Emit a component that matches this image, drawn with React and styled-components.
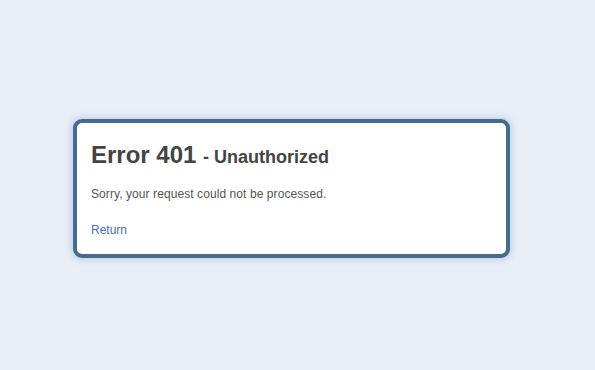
import React from 'react';
import styled, { createGlobalStyle } from 'styled-components';

const GlobalStyle = createGlobalStyle`
  html, body {
    margin: 0;
    padding: 0;
    background: #e9eff7;
    font-family: "Liberation Sans", Arial, sans-serif;
  }
`;

const Page = styled.div`
  width: 595px;
  height: 370px;
  display: flex;
  justify-content: center;
  align-items: flex-start;
  padding-top: 119px;
  box-sizing: border-box;
`;

const Card = styled.div`
  width: 437px;
  height: 139px;
  box-sizing: border-box;
  margin-left: -12px;
  background: #fff;
  border: 4px solid #456c8c;
  border-radius: 9px;
  box-shadow: 0 0 6px 2px rgba(140, 175, 215, 0.45);
  padding: 18px 14px;
  color: #444;
`;

const Title = styled.h1`
  margin: 0;
  font-size: 24px;
  font-weight: bold;
  line-height: 28px;
`;

const Sub = styled.span`
  font-size: 18px;
`;

const Text = styled.p`
  margin: 16px 0 0;
  font-size: 12px;
  line-height: 14px;
  letter-spacing: 0.08px;
  color: #555;
`;

const Link = styled.a`
  display: inline-block;
  margin-top: 22px;
  font-size: 12px;
  line-height: 14px;
  color: #4a70b8;
  text-decoration: none;
`;

export default function App() {
  return (
    <>
      <GlobalStyle />
      <Page>
        <Card>
          <Title>
            Error 401 <Sub>- Unauthorized</Sub>
          </Title>
          <Text>Sorry, your request could not be processed.</Text>
          <Link href="#">Return</Link>
        </Card>
      </Page>
    </>
  );
}
